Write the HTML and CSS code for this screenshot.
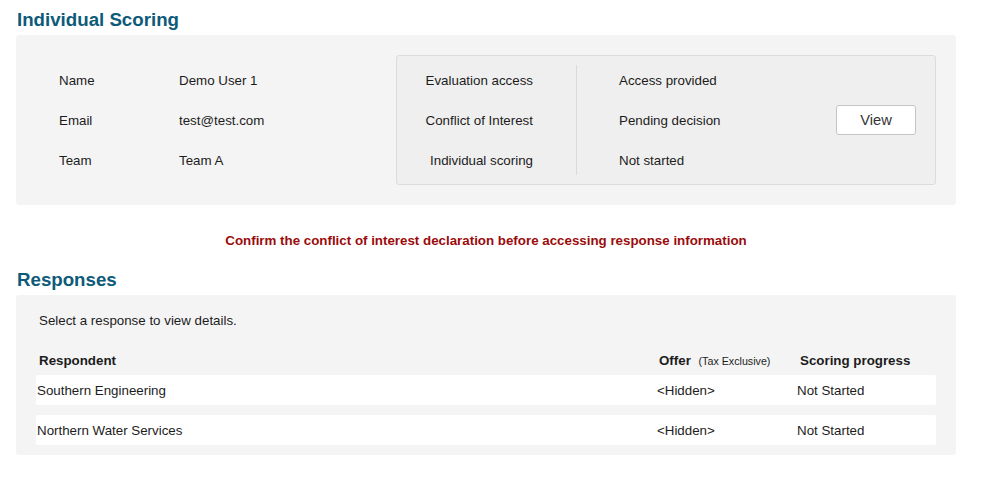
FILE: index.html
```html
<!DOCTYPE html>
<html lang="en">
<head>
    <meta charset="UTF-8">
    <meta name="viewport" content="width=device-width, initial-scale=1.0">
    <title>Individual Scoring</title>
    <link rel="stylesheet" href="styles.css">
</head>
<body>
    <main class="page">
        <h2 class="section-title">Individual Scoring</h2>
        <section class="panel scoring-panel">
            <div class="user-info">
                <div class="info-row"><span class="info-label">Name</span><span>Demo User 1</span></div>
                <div class="info-row"><span class="info-label">Email</span><span>test@test.com</span></div>
                <div class="info-row"><span class="info-label">Team</span><span>Team A</span></div>
            </div>
            <div class="status-box">
                <div class="status-labels">
                    <div class="status-row">Evaluation access</div>
                    <div class="status-row">Conflict of Interest</div>
                    <div class="status-row">Individual scoring</div>
                </div>
                <div class="divider"></div>
                <div class="status-values">
                    <div class="status-row">Access provided</div>
                    <div class="status-row">Pending decision</div>
                    <div class="status-row">Not started</div>
                </div>
                <button class="view-btn">View</button>
            </div>
        </section>

        <p class="warning">Confirm the conflict of interest declaration before accessing response information</p>

        <h2 class="section-title">Responses</h2>
        <section class="panel responses-panel">
            <p class="intro">Select a response to view details.</p>
            <div class="table-head">
                <span class="col-name">Respondent</span>
                <span class="col-offer">Offer <small>(Tax Exclusive)</small></span>
                <span class="col-progress">Scoring progress</span>
            </div>
            <div class="response-row">
                <span class="col-name">Southern Engineering</span>
                <span>&lt;Hidden&gt;</span>
                <span>Not Started</span>
            </div>
            <div class="response-row">
                <span class="col-name">Northern Water Services</span>
                <span>&lt;Hidden&gt;</span>
                <span>Not Started</span>
            </div>
        </section>
    </main>
</body>
</html>
```

FILE: styles.css
```css
body {
    font-family: Arial, "Liberation Sans", sans-serif;
    font-size: 13.33px;
    color: #1c1c1c;
    margin: 0;
    padding: 0;
}
.page {
    width: 940px;
    margin-left: 16px;
    padding-top: 9px;
}
.section-title {
    font-size: 18.7px;
    line-height: 22px;
    font-weight: bold;
    color: #0d5a79;
    margin: 0 0 4px 1px;
}
.panel {
    background-color: #f4f4f4;
    border-radius: 3px;
}
.scoring-panel {
    display: flex;
    align-items: center;
    height: 170px;
    padding: 0 20px 0 43px;
    box-sizing: border-box;
}
.user-info {
    flex: 1;
}
.info-row {
    display: flex;
    height: 40px;
    align-items: center;
}
.info-label {
    width: 120px;
}
.status-box {
    display: flex;
    width: 540px;
    height: 130px;
    box-sizing: border-box;
    padding: 4px 0;
    background-color: #efefef;
    border: 1px solid #dcdcdc;
    border-radius: 3px;
}
.status-row {
    height: 40px;
    line-height: 41px;
}
.status-labels {
    width: 179px;
    box-sizing: border-box;
    padding-right: 43px;
    text-align: right;
}
.divider {
    width: 1px;
    margin: 5px 0;
    background-color: #dadada;
}
.status-values {
    flex: 1;
    padding-left: 42px;
}
.view-btn {
    align-self: center;
    width: 80px;
    height: 30px;
    margin-right: 19px;
    background: white;
    border: 1px solid #c4c4c4;
    border-radius: 3px;
    font-family: Arial, "Liberation Sans", sans-serif;
    font-size: 14.7px;
    color: #333;
}
.warning {
    margin: 28px 0 21px;
    text-align: center;
    font-weight: bold;
    line-height: 15px;
    color: #9a0c0c;
}
.responses-panel {
    padding: 18px 20px 10px;
}
.intro {
    margin: 0 0 16px 3px;
    line-height: 16px;
}
.table-head,
.response-row {
    display: grid;
    grid-template-columns: 621px 140px 1fr;
    align-items: center;
    height: 30px;
}
.table-head {
    font-weight: bold;
}
.table-head span {
    padding-left: 2px;
}
.table-head .col-name {
    padding-left: 3px;
}
.table-head .col-progress {
    padding-left: 3px;
}
.table-head small {
    font-weight: normal;
    font-size: 10.7px;
    margin-left: 4px;
}
.response-row {
    background-color: white;
    border-radius: 2px;
    margin-bottom: 10px;
}
.response-row .col-name {
    padding-left: 1px;
}
.response-row:last-child {
    margin-bottom: 0;
}
```
